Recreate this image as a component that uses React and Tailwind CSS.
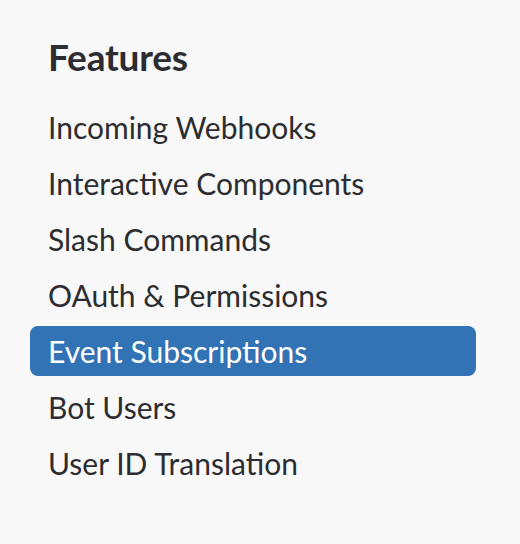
const items = [
  'Incoming Webhooks',
  'Interactive Components',
  'Slash Commands',
  'OAuth & Permissions',
  'Event Subscriptions',
  'Bot Users',
  'User ID Translation',
]

export default function App() {
  const active = 'Event Subscriptions'

  return (
    <div className="min-h-[544px] w-[520px] bg-[#f8f8f8] font-['Lato',sans-serif] text-[#2c2d30]">
      <nav className="pt-[35px] pl-[30px] pr-[44px]">
        <h2 className="pl-[18px] text-[37px] font-bold leading-[44px] tracking-[-0.2px]">
          Features
        </h2>
        <ul className="mt-[20px]">
          {items.map((label) => {
            const isActive = label === active
            return (
              <li key={label} className="py-[3px]">
                <a
                  href="#"
                  className={`block h-[50px] rounded-[8px] pl-[18px] text-[30px] leading-[50px] ${
                    isActive ? 'bg-[#3173b4] text-white' : 'text-[#2c2d30]'
                  }`}
                >
                  {label}
                </a>
              </li>
            )
          })}
        </ul>
      </nav>
    </div>
  )
}
